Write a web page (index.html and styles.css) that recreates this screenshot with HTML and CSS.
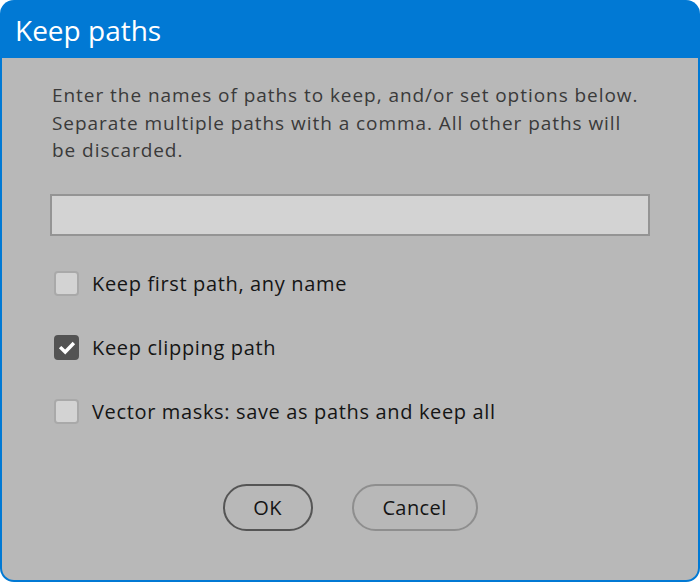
FILE: index.html
```html
<!DOCTYPE html>
<html>
<head>
<meta charset="utf-8">
<link rel="stylesheet" href="styles.css">
</head>
<body>
<div class="dialog">
  <div class="titlebar">Keep paths</div>
  <div class="content">
    <p class="intro">Enter the names of paths to keep, and/or set options below. Separate multiple paths with a comma. All other paths will be discarded.</p>
    <div class="field"></div>
    <div class="options">
      <label class="option"><span class="box"></span><span class="label">Keep first path, any name</span></label>
      <label class="option"><span class="box checked"><svg width="18" height="18" viewBox="0 0 18 18"><path d="M3.3 9.3 L7.2 13 L14.7 5.2" fill="none" stroke="#ffffff" stroke-width="3.4" stroke-linecap="square"/></svg></span><span class="label">Keep clipping path</span></label>
      <label class="option"><span class="box"></span><span class="label">Vector masks: save as paths and keep all</span></label>
    </div>
    <div class="buttons">
      <button class="btn primary">OK</button>
      <button class="btn">Cancel</button>
    </div>
  </div>
</div>
</body>
</html>
```
FILE: styles.css
```css
html, body {
  margin: 0;
  padding: 0;
  background: #ffffff;
}
.dialog {
  width: 700px;
  height: 582px;
  box-sizing: border-box;
  background: #0179d4;
  border-radius: 14px;
  padding: 0 2px 2px 2px;
  display: flex;
  flex-direction: column;
  overflow: hidden;
}
.titlebar {
  height: 58px;
  box-sizing: border-box;
  padding: 12px 0 0 13px;
  color: #ffffff;
  font-family: "Open Sans", "Noto Sans", sans-serif;
  font-size: 28px;
  line-height: 36px;
}
.content {
  flex: 1;
  background: #b8b8b8;
  border-radius: 0 0 12px 12px;
  padding: 24px 48px 0 48px;
  font-family: "Open Sans", sans-serif;
}
.intro {
  margin: 0;
  font-size: 19px;
  letter-spacing: 0.95px;
  line-height: 27.5px;
  color: #3a3a3a;
  padding-left: 2px;
  width: 592px;
}
.field {
  margin-top: 29px;
  height: 42px;
  width: 600px;
  box-sizing: border-box;
  border: 2px solid #949494;
  background: #d3d3d3;
}
.options {
  display: flex;
  flex-direction: column;
  gap: 38px;
  margin-top: 35px;
  padding-left: 4px;
}
.option {
  display: flex;
  align-items: center;
  gap: 13px;
  height: 26px;
}
.box {
  width: 25px;
  height: 25px;
  box-sizing: border-box;
  border: 2px solid #a9a9a9;
  border-radius: 4px;
  background: #d3d3d3;
  display: flex;
  align-items: center;
  justify-content: center;
  flex: none;
}
.box.checked {
  background: #535353;
  border-color: #535353;
}
.label {
  font-size: 20px;
  letter-spacing: 0.65px;
  color: #151515;
}
.buttons {
  display: flex;
  justify-content: center;
  gap: 39px;
  margin-top: 59px;
}
.btn {
  height: 47px;
  box-sizing: border-box;
  border-radius: 24px;
  border: 2px solid #8e8e8e;
  background: transparent;
  font-family: "Open Sans", sans-serif;
  font-size: 20px;
  letter-spacing: 0.4px;
  color: #151515;
  padding: 0;
  width: 126px;
}
.btn.primary {
  border-color: #555555;
  width: 90px;
}
```
